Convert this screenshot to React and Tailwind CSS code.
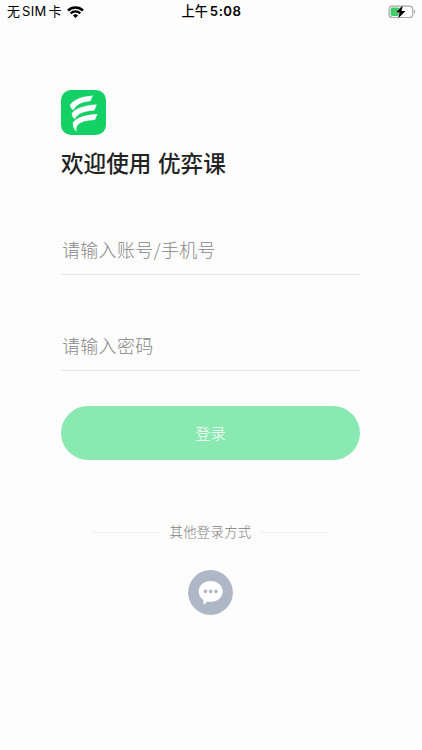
import { useState } from "react";

const WifiIcon = () => (
  <svg viewBox="0 0 17 12" className="w-[17px] h-3" fill="none" stroke="#000">
    <path d="M1 4.5a10.7 10.7 0 0 1 15 0" strokeWidth="2.5" />
    <path d="M3.7 7.4a6.9 6.9 0 0 1 9.6 0" strokeWidth="2.2" />
    <path d="M8.5 12 5.9 9.5a3.7 3.7 0 0 1 5.2 0z" fill="#000" stroke="none" />
  </svg>
);

const BatteryIcon = () => (
  <svg viewBox="0 0 28 14" className="w-7 h-3.5">
    <rect x="1.1" y="1.1" width="23.6" height="11.4" rx="3.3" fill="none" stroke="#a9a9a9" strokeWidth="1.2" />
    <path d="M26 4.8c1.6.4 1.6 3.6 0 4z" fill="#a9a9a9" />
    <rect x="2.6" y="2.6" width="9" height="8.4" rx="1.8" fill="#3fcb68" />
    <path
      d="M14.9.3 7.6 7.6h4l-1.5 5.9 7.4-7.6h-4z"
      fill="#000"
      stroke="#fff"
      strokeWidth="0.8"
      paintOrder="stroke"
    />
  </svg>
);

const Logo = () => (
  <svg viewBox="0 0 45 45" className="w-[45px] h-[45px]">
    <rect width="45" height="45" rx="10" fill="#14d165" />
    <g fill="#fff">
      <path d="M9 14.8C14 8.2 22.5 6.4 32 5.5L29.3 11.3C21.5 11.9 15.2 14.2 12.4 20.3 10.4 19 9.2 17.2 9 14.8z" />
      <path d="M10.7 23.6C15.5 17.3 25 15.3 35.8 14.6L33.3 20.4C24.4 20.8 16.7 22.8 13.9 29.1 12 27.8 10.8 26 10.7 23.6z" />
      <path d="M11.9 32.8C16.5 26.6 25.5 24.8 36.6 24.1L33.9 29.9C25.8 30.4 18 31.6 16 36.2 15.2 38 15.3 39.6 15.8 41.8 13 39.7 11.5 36.7 11.9 32.8z" />
    </g>
  </svg>
);

const ChatIcon = () => (
  <svg viewBox="0 0 45 45" className="w-[45px] h-[45px]">
    <circle cx="22.5" cy="22.5" r="22.4" fill="#adb7c5" />
    <path
      d="M22.7 11c6.8 0 12 4.6 12 10.4s-5.2 10.4-12 10.4c-1.1 0-2.1-.1-3.1-.4L16 34.2c-.6.3-.9.1-.8-.5l.4-3.7c-3-1.9-4.9-5-4.9-8.6 0-5.8 5.2-10.4 12-10.4z"
      fill="#fff"
    />
    <g fill="#adb7c5">
      <circle cx="17.4" cy="21.4" r="1.8" />
      <circle cx="22.7" cy="21.4" r="1.8" />
      <circle cx="28" cy="21.4" r="1.8" />
    </g>
  </svg>
);

const StatusBar = () => (
  <header className="grid grid-cols-3 items-center h-6 pl-[7px] pr-[6px] text-black">
    <div className="flex items-center gap-[5px] text-[13px] whitespace-nowrap">
      <span className="flex gap-[2px]">
        <span>无</span>
        <span className="tracking-[0.3px]">SIM</span>
        <span>卡</span>
      </span>
      <WifiIcon />
    </div>
    <div className="flex justify-center gap-[2px] text-[13.2px] font-semibold whitespace-nowrap">
      <span className="font-medium">上午</span>
      <span className="tracking-[0.5px]">5:08</span>
    </div>
    <div className="flex justify-end">
      <BatteryIcon />
    </div>
  </header>
);

const Field = ({ type, placeholder, value, onChange }) => (
  <input
    type={type}
    placeholder={placeholder}
    value={value}
    onChange={(e) => onChange(e.target.value)}
    className="block w-[300px] h-[50px] pl-[1px] pb-[1px] border-b border-[#e6e6e6] bg-transparent text-[18px] tracking-[0.3px] font-light text-gray-800 placeholder:text-[#868686] outline-none"
  />
);

const App = () => {
  const [account, setAccount] = useState("");
  const [password, setPassword] = useState("");

  return (
    <div className="w-full h-[750px] overflow-hidden bg-[#fdfdfd] font-[Inter,'Noto_Sans_CJK_SC',sans-serif]">
      <StatusBar />
      <main className="pl-[61px] pt-[66px] font-['Noto_Sans_CJK_SC',sans-serif]">
        <Logo />
        <h1 className="mt-3 h-8 leading-8 text-[22.6px] [word-spacing:1.5px] font-medium text-[#222] whitespace-nowrap">
          欢迎使用 优弈课
        </h1>
        <form className="mt-[46px]" onSubmit={(e) => e.preventDefault()}>
          <Field type="text" placeholder="请输入账号/手机号" value={account} onChange={setAccount} />
          <div className="mt-[46px]">
            <Field type="password" placeholder="请输入密码" value={password} onChange={setPassword} />
          </div>
          <button
            type="submit"
            className="block mt-[35px] pb-[2px] w-[299px] h-[54px] rounded-full bg-[#8ae8b1] text-[15.3px] font-light text-white"
          >
            登录
          </button>
        </form>
        <div className="flex flex-col items-center w-[299px]">
          <div className="flex items-center gap-[9px] mt-[62px] h-5 text-[13.3px] tracking-[0.35px] font-light text-[#7c7c7c] whitespace-nowrap">
            <span className="w-[68px] h-px bg-[#f0f0f0]" />
            <span>其他登录方式</span>
            <span className="w-[68px] h-px bg-[#f0f0f0]" />
          </div>
          <button type="button" className="mt-7">
            <ChatIcon />
          </button>
        </div>
      </main>
    </div>
  );
};

export default App;
